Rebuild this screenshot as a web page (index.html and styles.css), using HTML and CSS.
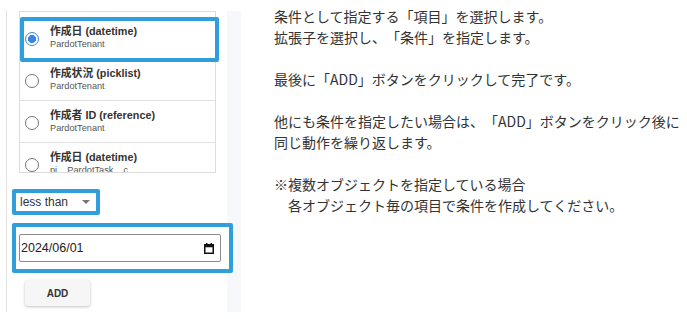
FILE: index.html
```html
<!DOCTYPE html>
<html lang="ja">
<head>
    <meta charset="UTF-8">
    <meta name="viewport" content="width=device-width, initial-scale=1.0">
    <title>条件の指定</title>
    <link rel="stylesheet" href="styles.css">
</head>
<body>
    <div class="layout">
        <div class="panel">
            <div class="list-wrap">
                <ul class="field-list">
                    <li class="field">
                        <span class="radio checked"></span>
                        <div class="field-text">
                            <div class="field-name">作成日 (datetime)</div>
                            <div class="field-object">PardotTenant</div>
                        </div>
                    </li>
                    <li class="field">
                        <span class="radio"></span>
                        <div class="field-text">
                            <div class="field-name">作成状況 (picklist)</div>
                            <div class="field-object">PardotTenant</div>
                        </div>
                    </li>
                    <li class="field">
                        <span class="radio"></span>
                        <div class="field-text">
                            <div class="field-name">作成者 ID (reference)</div>
                            <div class="field-object">PardotTenant</div>
                        </div>
                    </li>
                    <li class="field">
                        <span class="radio"></span>
                        <div class="field-text">
                            <div class="field-name">作成日 (datetime)</div>
                            <div class="field-object">pi__PardotTask__c</div>
                        </div>
                    </li>
                </ul>
                <!-- highlight drawn over the selected row -->
                <div class="mark mark-field"></div>
            </div>

            <div class="operator marked">
                <span class="operator-text">less than</span>
                <span class="caret"></span>
            </div>

            <div class="date-box marked">
                <div class="date-input">
                    <span>2024/06/01</span>
                    <svg class="cal-icon" width="10" height="11" viewBox="0 0 10 11">
                        <rect x="0.75" y="1.75" width="8.5" height="8.5" fill="none" stroke="#111" stroke-width="1.5"/>
                        <rect x="0.75" y="1.75" width="8.5" height="2.5" fill="#111"/>
                        <rect x="2" y="0" width="1.5" height="2" fill="#111"/>
                        <rect x="6.5" y="0" width="1.5" height="2" fill="#111"/>
                    </svg>
                </div>
            </div>

            <button class="add-btn">ADD</button>
        </div>

        <div class="scroll-strip"></div>

        <div class="notes">
            <p>条件として指定する「項目」を選択します。<br>拡張子を選択し、「条件」を指定します。</p>
            <p>最後に「ADD」ボタンをクリックして完了です。</p>
            <p>他にも条件を指定したい場合は、「ADD」ボタンをクリック後に<br>同じ動作を繰り返します。</p>
            <p>※複数オブジェクトを指定している場合<br>　各オブジェクト毎の項目で条件を作成してください。</p>
        </div>
    </div>
</body>
</html>
```

FILE: styles.css
```css
body {
    margin: 0;
    background-color: #fff;
    font-family: "Liberation Sans", "Noto Sans CJK JP", sans-serif;
    color: #333;
}
.layout {
    display: flex;
    align-items: flex-start;
}
.panel {
    width: 221px;
    height: 302px;
    margin: 10px 0 0 6px;
    padding-top: 1px;
    box-sizing: border-box;
    border-left: 1px solid #e2e2e2;
}
.scroll-strip {
    width: 14px;
    height: 301px;
    margin-top: 11px;
    background-color: #f7f8fb;
}
/* field list */
.list-wrap {
    position: relative;
    margin-left: 12px;
    width: 197px;
}
.field-list {
    list-style: none;
    margin: 0;
    padding: 5px 0 0;
    height: 162px;
    box-sizing: border-box;
    overflow: hidden;
    border: 1px solid #dcdcdc;
}
.field {
    display: flex;
    align-items: center;
    height: 42px;
    box-sizing: border-box;
    padding-left: 5px;
    border-bottom: 1px solid #e0e0e0;
}
.radio {
    width: 14px;
    height: 14px;
    box-sizing: border-box;
    border: 1.5px solid #757575;
    border-radius: 50%;
    margin-right: 11px;
    margin-top: 2px;
    flex-shrink: 0;
}
.radio.checked {
    border-color: #3a86e6;
    background: radial-gradient(circle, #3a86e6 0 3.8px, #fff 4.2px);
}
.field-text {
    margin-top: -2px;
}
.field-name {
    font-size: 10.8px;
    font-weight: bold;
    line-height: 14px;
    color: #333;
}
.field-object {
    font-size: 9.2px;
    line-height: 12px;
    color: #555;
}
.mark {
    position: absolute;
    border: 4px solid #2f9fdc;
    border-radius: 2px;
    box-sizing: border-box;
}
.mark-field {
    left: 1px;
    top: 6px;
    width: 199px;
    height: 45px;
}
/* condition controls */
.marked {
    border: 4px solid #2f9fdc;
    border-radius: 2px;
    box-sizing: border-box;
}
.operator {
    display: flex;
    align-items: center;
    width: 88px;
    height: 26px;
    margin: 16px 0 0 5px;
    padding-left: 4px;
    font-size: 12px;
    color: #333;
}
.caret {
    width: 0;
    height: 0;
    margin-left: 14px;
    border-left: 4px solid transparent;
    border-right: 4px solid transparent;
    border-top: 4px solid #757575;
}
.date-box {
    position: relative;
    z-index: 1;
    width: 221px;
    height: 50px;
    margin: 8px 0 0 5px;
    padding: 7px 0 0 3px;
    background-color: #fff;
}
.date-input {
    display: flex;
    align-items: center;
    justify-content: space-between;
    width: 202px;
    height: 28px;
    box-sizing: border-box;
    padding: 0 6px 0 1px;
    border: 1px solid #8d8d8d;
    border-radius: 2px;
    font-size: 12.5px;
    color: #222;
}
.cal-icon {
    display: block;
}
.add-btn {
    display: block;
    width: 65px;
    height: 26px;
    margin: 7px 0 0 18px;
    border: none;
    border-radius: 3px;
    background-color: #f6f6f6;
    box-shadow: 0 1px 3px rgba(0,0,0,0.25);
    font-family: "Liberation Sans", sans-serif;
    font-size: 10px;
    font-weight: bold;
    color: #333;
}
/* description text */
.notes {
    padding: 6px 0 0 33px;
    font-family: "Noto Sans CJK JP", sans-serif;
    font-size: 14px;
    line-height: 21px;
    color: #333;
    white-space: nowrap;
    text-spacing-trim: space-all;
}
.notes p {
    margin: 0 0 21px;
}
```
